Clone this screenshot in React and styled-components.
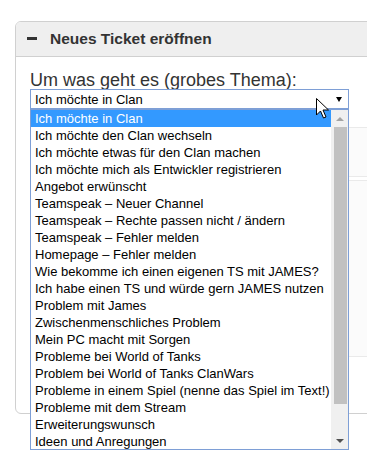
import React from 'react';
import styled, { createGlobalStyle } from 'styled-components';

const GlobalStyle = createGlobalStyle`
  html, body {
    margin: 0;
    padding: 0;
    background: #fff;
    overflow: hidden;
  }
  body {
    font-family: 'Liberation Sans', Arial, sans-serif;
  }
`;

// Styles
const Page = styled.div`
  width: 367px;
  height: 469px;
  padding: 21px 0 0 15px;
  box-sizing: border-box;
  overflow: hidden;
`;

const Panel = styled.div`
  width: 372px;
  height: 393px;
  box-sizing: border-box;
  border: 1px solid #d0d0d0;
  border-radius: 6px;
  background: #fff;
`;

const Header = styled.div`
  height: 35px;
  box-sizing: border-box;
  display: flex;
  align-items: center;
  gap: 13px;
  padding: 0 0 1px 11px;
  background: #efefef;
  border-bottom: 1px solid #d0d0d0;
  border-radius: 5px 5px 0 0;
  color: #333;
  font-size: 15.5px;
  font-weight: 700;
`;

const Minus = styled.span`
  display: block;
  width: 10px;
  height: 3px;
  background: #333;
`;

const Body = styled.div`
  padding: 14px 0 0 14px;
`;

const Label = styled.div`
  font-size: 18px;
  line-height: 18px;
  color: #333;
`;

const SelectWrap = styled.div`
  position: relative;
  width: 319px;
`;

const Select = styled.div`
  height: 20px;
  box-sizing: border-box;
  display: flex;
  align-items: center;
  justify-content: space-between;
  padding: 0 6px 0 4px;
  border: 1px solid #7e9fd6;
  font-size: 13px;
  color: #000;
`;

const Caret = styled.span`
  width: 0;
  height: 0;
  border-left: 3px solid transparent;
  border-right: 3px solid transparent;
  border-top: 5px solid #000;
`;

const Field = styled.div`
  width: 340px;
  height: ${(props) => props.h}px;
  margin-top: ${(props) => props.mt}px;
  box-sizing: border-box;
  background: #fbfbfb;
  border: 1px solid #eaeaea;
`;

const List = styled.div`
  position: absolute;
  top: 20px;
  left: 0;
  width: 319px;
  height: 341px;
  box-sizing: border-box;
  border: 1px solid #7e9fd6;
  background: #fff;
  display: flex;
  z-index: 2;
`;

const Options = styled.div`
  flex: 1;
  display: flex;
  flex-direction: column;
`;

const Option = styled.div`
  height: 17px;
  line-height: 17px;
  padding-left: 4px;
  font-size: 13px;
  white-space: nowrap;
  color: ${(props) => (props.active ? '#fff' : '#000')};
  background: ${(props) => (props.active ? '#3399ff' : 'transparent')};
`;

const Scrollbar = styled.div`
  width: 17px;
  background: #f0f0f0;
  display: flex;
  flex-direction: column;
  align-items: center;
`;

const ScrollArrow = styled.div`
  height: 17px;
  width: 100%;
  display: flex;
  align-items: center;
  justify-content: center;
`;

const ArrowTri = styled.span`
  width: 0;
  height: 0;
  border-left: 4px solid transparent;
  border-right: 4px solid transparent;
  ${(props) =>
    props.up
      ? 'border-bottom: 4px solid #a3a3a3;'
      : 'border-top: 4px solid #505050;'}
`;

const Thumb = styled.div`
  width: 13px;
  height: 277px;
  margin-left: 1px;
  background: #c1c1c1;
`;

const Spacer = styled.div`
  flex: 1;
`;

const Cursor = styled.svg`
  position: absolute;
  left: 285px;
  top: 8px;
  z-index: 3;
`;

const options = [
  'Ich möchte in Clan',
  'Ich möchte den Clan wechseln',
  'Ich möchte etwas für den Clan machen',
  'Ich möchte mich als Entwickler registrieren',
  'Angebot erwünscht',
  'Teamspeak – Neuer Channel',
  'Teamspeak – Rechte passen nicht / ändern',
  'Teamspeak – Fehler melden',
  'Homepage – Fehler melden',
  'Wie bekomme ich einen eigenen TS mit JAMES?',
  'Ich habe einen TS und würde gern JAMES nutzen',
  'Problem mit James',
  'Zwischenmenschliches Problem',
  'Mein PC macht mit Sorgen',
  'Probleme bei World of Tanks',
  'Problem bei World of Tanks ClanWars',
  'Probleme in einem Spiel (nenne das Spiel im Text!)',
  'Probleme mit dem Stream',
  'Erweiterungswunsch',
  'Ideen und Anregungen',
];

function App() {
  return (
    <Page>
      <GlobalStyle />
      <Panel>
        <Header>
          <Minus />
          Neues Ticket eröffnen
        </Header>
        <Body>
          <Label>Um was geht es (grobes Thema):</Label>
          <SelectWrap>
            <Select>
              {options[0]}
              <Caret />
            </Select>
            {/* Open dropdown list */}
            <List>
              <Options>
                {options.map((o, i) => (
                  <Option key={o} active={i === 0}>
                    {o}
                  </Option>
                ))}
              </Options>
              <Scrollbar>
                <ScrollArrow>
                  <ArrowTri up />
                </ScrollArrow>
                <Thumb />
                <Spacer />
                <ScrollArrow>
                  <ArrowTri />
                </ScrollArrow>
              </Scrollbar>
            </List>
            <Cursor width="16" height="24" viewBox="0 0 16 24">
              <path
                d="M1.5 1.5 L1.5 18 L5.5 14 L8.5 21 L11 20 L8 13 L13.5 13 Z"
                fill="#fff"
                stroke="#000"
                strokeWidth="1"
              />
            </Cursor>
          </SelectWrap>
          <Field h={50} mt={18} />
          <Field h={177} mt={3} />
        </Body>
      </Panel>
    </Page>
  );
}

export default App;
